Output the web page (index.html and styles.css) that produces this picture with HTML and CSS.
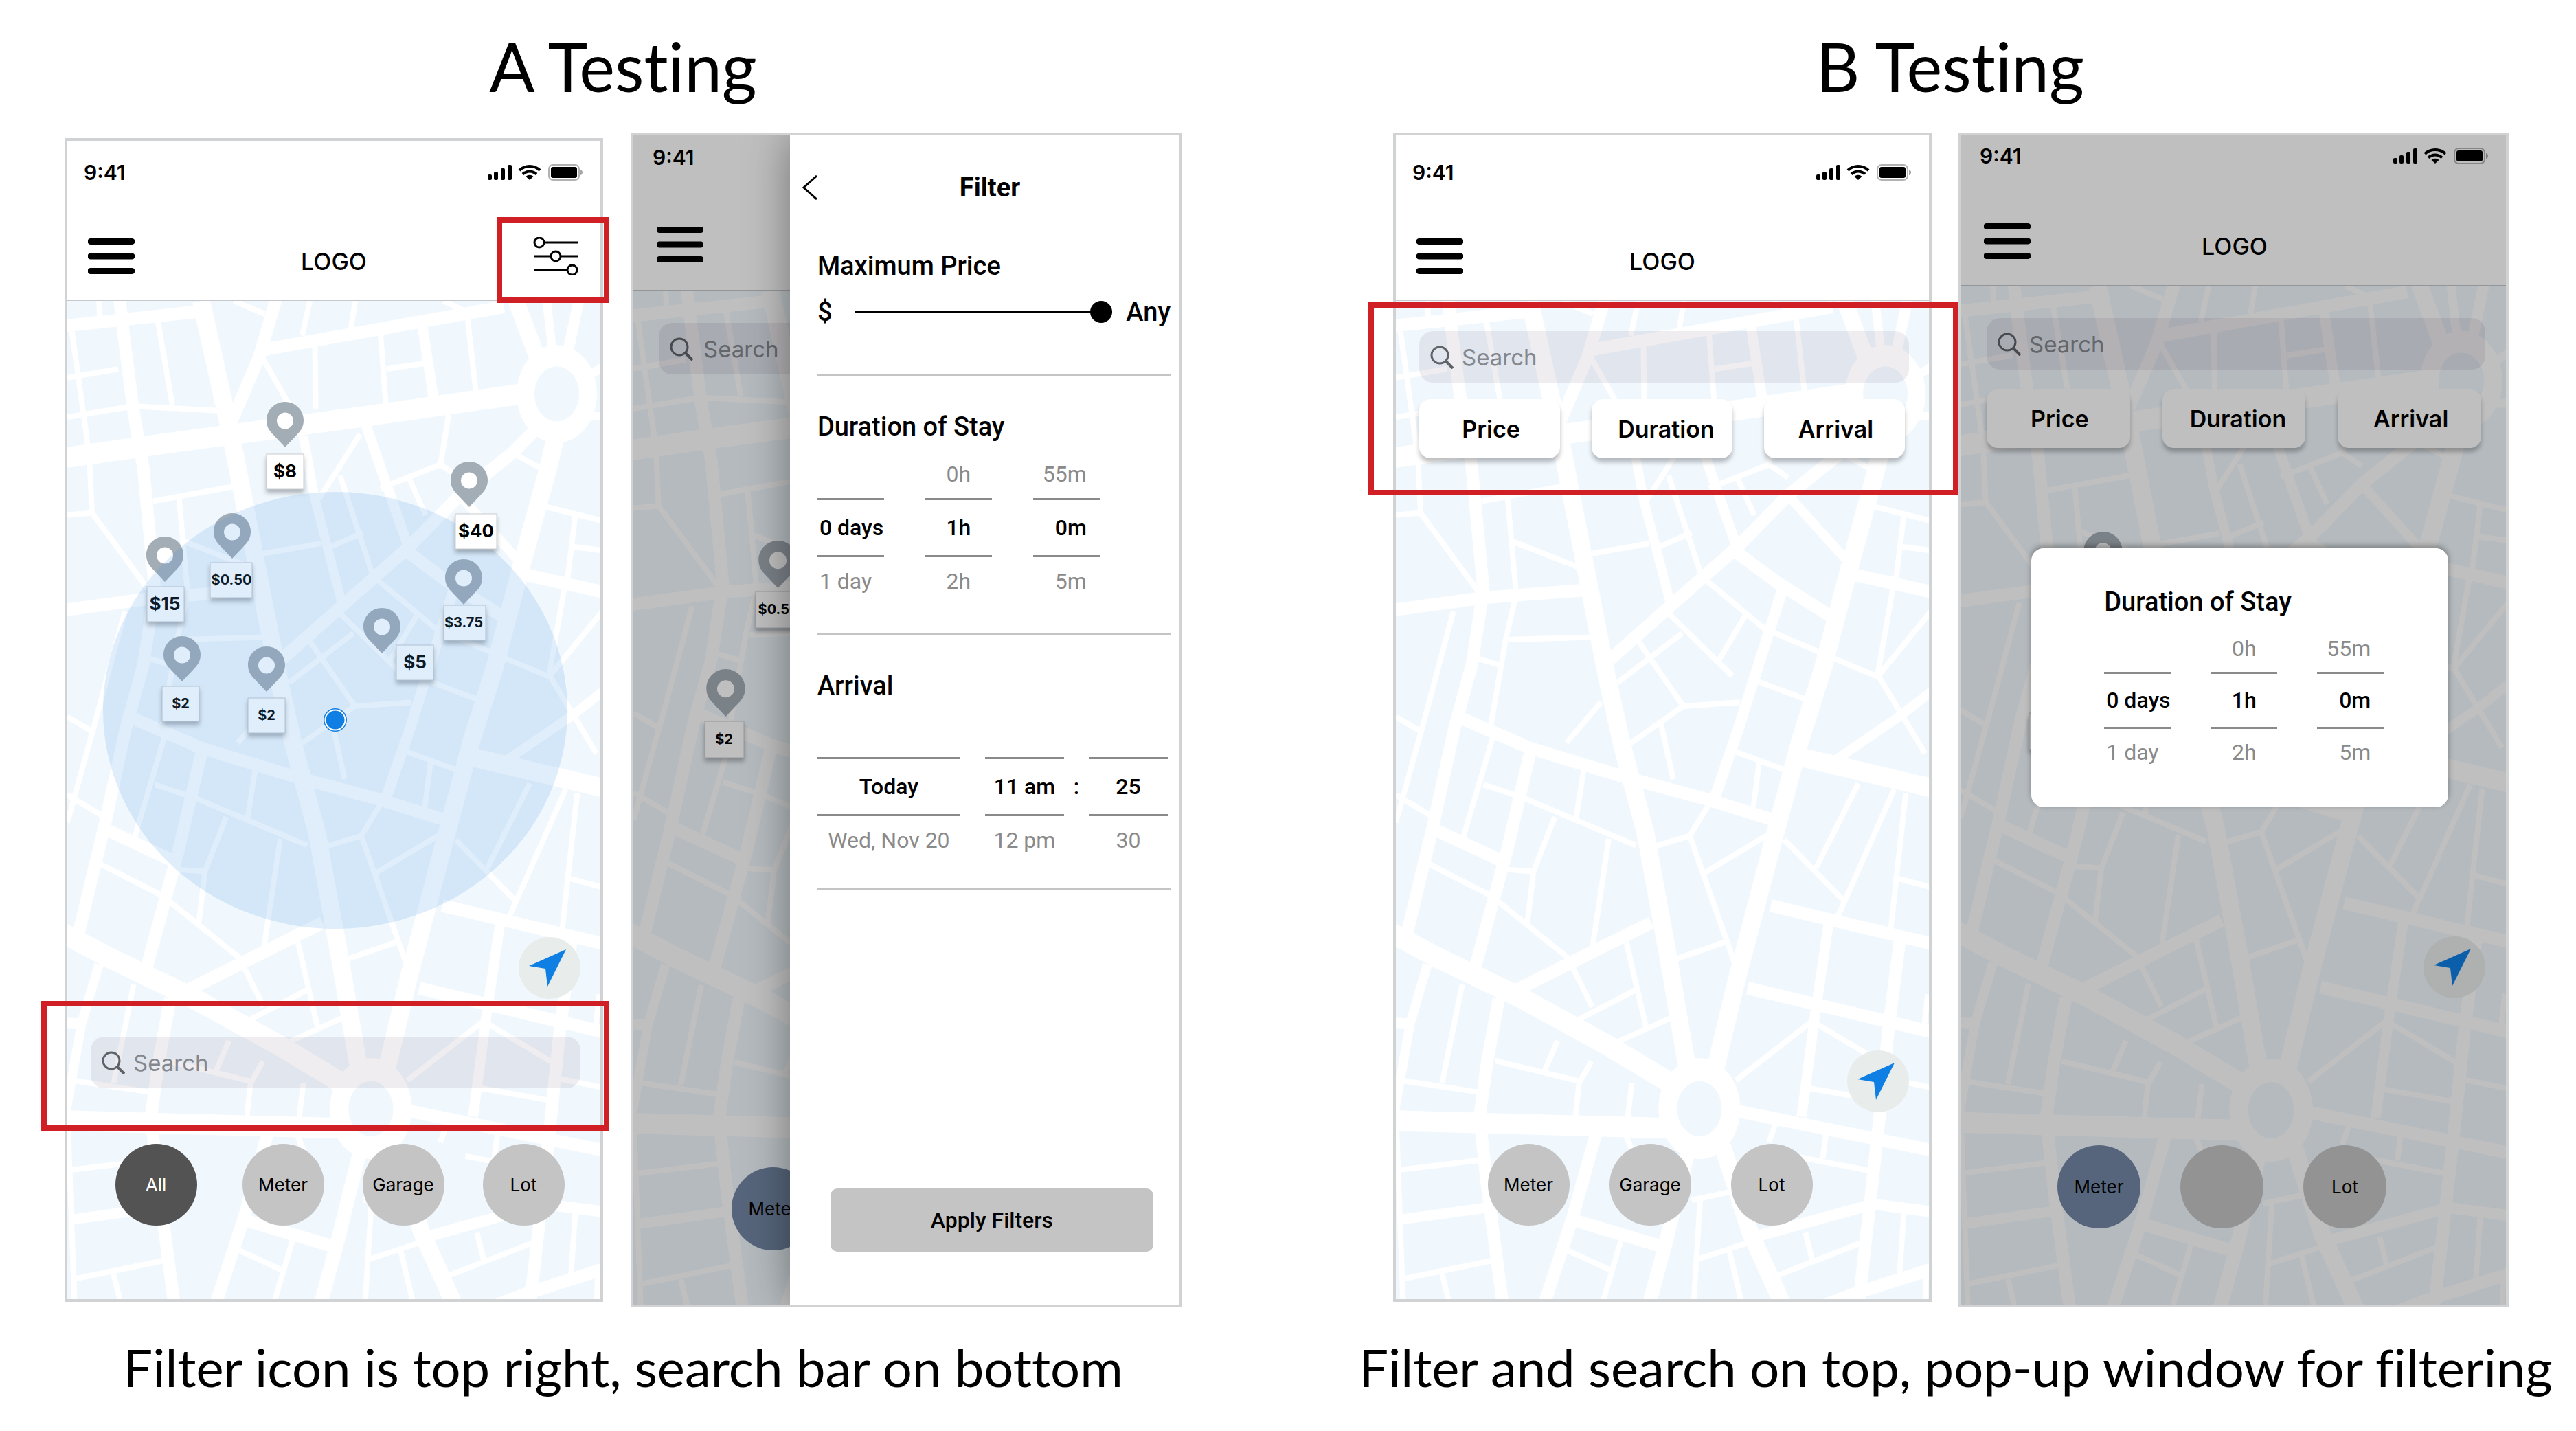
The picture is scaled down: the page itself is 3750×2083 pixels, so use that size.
FILE: index.html
```html
<!DOCTYPE html>
<html lang="en">
<head>
<meta charset="utf-8">
<meta name="viewport" content="width=device-width, initial-scale=1">
<title>Parking app A/B testing</title>
<link rel="stylesheet" href="styles.css">
</head>
<body>
<svg class="defs" aria-hidden="true">
  <!-- Street map shared by all screens -->
  <symbol id="streets" viewBox="93 447 1382 2532" preserveAspectRatio="none">
    <rect x="93" y="447" width="1382" height="2532" fill="#f0f8fe"/>
    <g fill="none" stroke="#fff" stroke-linejoin="round">
      <g stroke-width="52">
        <path d="M80 846L300 815L550 782L900 735L1290 680"/>
        <path d="M440 447L520 800L580 1100L640 1400L680 1576L740 1796L800 2116L850 2400" stroke-width="46"/>
        <path d="M920 2400L980 2156L1050 1896L1140 1566L1200 1380L1270 1120L1340 870L1362 780" stroke-width="46"/>
        <path d="M80 2050L200 2112L420 2216L640 2334L820 2440"/>
        <path d="M80 2526L820 2546"/>
        <path d="M940 2590L1010 2806L1095 2990" stroke-width="44"/>
        <path d="M850 2610L790 2846L750 2990" stroke-width="36"/>
        <path d="M1150 1606L1485 1683" stroke-width="48"/>
        <path d="M1250 430L1315 600" stroke-width="42"/>
      </g>
      <g stroke-width="32">
        <path d="M228 440L240 540L265 730L290 870L320 1180L290 1370L245 1530L190 1776L120 2060"/>
        <path d="M360 2216L330 2376L310 2516L330 2696L370 2990"/>
        <path d="M445 1576L380 1846L298 2140"/>
        <path d="M80 1232L320 1200L590 1180"/>
        <path d="M200 1791L365 1866"/>
        <path d="M245 1498L440 1581L690 1656L900 1711L1080 1766"/>
        <path d="M650 1355L800 1225L980 1070L1110 940L1250 830L1330 750"/>
        <path d="M970 1080L1080 1160L1225 1250"/>
        <path d="M1100 930L1262 1105" stroke-width="24"/>
        <path d="M1095 1180L1030 1380L980 1536L920 1706" stroke-width="28"/>
        <path d="M1275 1140L1485 1186"/>
        <path d="M1220 1620L1400 1500L1485 1435" stroke-width="24"/>
        <path d="M1065 1981L1485 2078"/>
        <path d="M1005 2190L1485 2302"/>
        <path d="M1215 2026L1180 2256L1145 2516" stroke-width="26"/>
        <path d="M1400 2066L1370 2296L1345 2536L1320 2756L1293 2990"/>
        <path d="M755 2024L395 2200"/>
        <path d="M175 2130L130 2280L90 2500" stroke-width="24"/>
        <path d="M975 2501L1485 2602"/>
        <path d="M80 511L435 474"/>
        <path d="M595 572L1225 462"/>
        <path d="M635 440L590 590L520 750"/>
        <path d="M1335 440L1350 570" stroke-width="22"/>
        <path d="M1420 440L1388 590" stroke-width="28"/>
        <path d="M1440 640L1485 612M1440 740L1485 738" stroke-width="22"/>
        <path d="M1005 2826L1330 2738L1485 2758" stroke-width="28"/>
        <path d="M1485 2902L1280 2966L1200 2996"/>
        <path d="M612 2560L550 2776L478 2990"/>
        <path d="M558 2780L785 2846"/>
        <path d="M100 2778L335 2746" stroke-width="26"/>
        <path d="M1012 500L1045 710" stroke-width="26"/>
        <path d="M868 765L980 1080" stroke-width="26"/>
        <path d="M705 790L735 950L805 1215" stroke-width="24"/>
      </g>
      <g stroke-width="14">
        <path d="M105 525L150 840L157 985L315 1195M93 990L157 985M93 642L225 620M93 742L262 714M265 714L520 727"/>
        <path d="M328 500L365 710M175 447L177 490M315 955L540 915M383 950L405 1190L378 1305L338 1530M398 1058L565 1122"/>
        <path d="M385 1306L605 1300M290 1350L362 1370M242 1235L165 1516L93 1770M93 1502L160 1540M93 1700L190 1756"/>
        <path d="M590 1090L750 1062M598 590L668 710M735 560L737 720M905 530L920 725M920 620L1020 605M1130 485L1152 675"/>
        <path d="M722 447L702 535M840 447L828 515M525 447L605 480M1068 447L1130 475"/>
        <path d="M745 950L852 785M800 890L882 1135M765 1075L860 1035M905 922L1060 862L1110 895M1060 865L1082 735M978 895L1022 990"/>
        <path d="M1232 825L1318 870M1330 968L1480 1005M1410 990L1390 1150M1400 1070L1480 1080M1382 1175L1342 1395L1465 1595"/>
        <path d="M1480 1235L1342 1400L1220 1350L1065 1285M1020 1408L1162 1460M885 1145L1065 1292M1002 1240L928 1362"/>
        <path d="M795 1235L965 1398M718 1305L838 1475L985 1465M668 1415L835 1290M625 1465L535 1568M838 1475L700 1570M778 1510L812 1660"/>
      </g>
      <g stroke-width="14" transform="translate(0 1516)">
        <path d="M350 20L268 290M320 158L420 190L715 312M580 120L560 245M505 240L450 378L433 515M372 373L450 378"/>
        <path d="M180 360L340 440L545 602M645 295L603 570M548 615L602 722M690 555L742 775M535 770L722 675M635 825L805 750"/>
        <path d="M755 317L855 288L910 200M855 288L980 635M893 382L1070 278M815 602L945 558M955 68L1105 122M1035 100L1020 215"/>
        <path d="M1100 298L1252 450M1182 370L1292 155M1240 490L1385 170M1415 180L1390 400L1375 535M1390 395L1480 418"/>
        <path d="M975 908L1172 758L1350 862M1165 928L1350 960M1360 902L1480 926M1472 690L1462 780"/>
        <path d="M350 858L575 912M512 808L478 885M600 860L568 915L558 1005M705 915L693 1010M265 665L213 915M105 908L320 940"/>
        <path d="M93 763L130 765" stroke-width="28"/>
        <path d="M98 1136L315 1110M110 1412L345 1365M213 1400L232 1475M540 1340L655 1392M678 1310L628 1475M860 1212L965 1190"/>
        <path d="M882 1210L865 1475M875 1362L1012 1318M955 1330L990 1475M1082 1005L1060 1065M1208 1045L1200 1105M1125 1100L1325 1138"/>
        <path d="M1155 1295L1172 1362M1085 1402L1305 1318M1410 1245L1398 1410M1468 1390L1466 1475M95 1030L112 1480M690 1050L725 1130"/>
      </g>
    </g>
    <g fill="#fff">
      <ellipse cx="1362" cy="683" rx="104" ry="124"/>
      <ellipse cx="880" cy="2496" rx="106" ry="128"/>
    </g>
    <g fill="#f0f8fe">
      <ellipse cx="1362" cy="683" rx="58" ry="70"/>
      <ellipse cx="880" cy="2496" rx="58" ry="70"/>
    </g>
  </symbol>

  <symbol id="pin" viewBox="0 0 54 66">
    <path d="M27 12.500a15 15 0 1 0 0 30a15 15 0 1 0 0-30z" fill="#fff"/>
    <path fill-rule="evenodd" d="M27 0C12 0 0 12 0 27c0 9 4 15 10 21l17 18 17-18c6-6 10-12 10-21C54 12 42 0 27 0zm0 15.500a12 12 0 1 1 0 24a12 12 0 1 1 0-24z" fill="#a3adb5"/>
  </symbol>

  <symbol id="status" viewBox="0 0 138 24">
    <rect x="0" y="15" width="6" height="8" rx="2"/><rect x="9" y="11" width="6" height="12" rx="2"/>
    <rect x="19" y="6" width="6" height="17" rx="2"/><rect x="29" y="1" width="6" height="22" rx="2"/>
    <path d="M46 9C54 1 68 1 76 9M51 14.500C57 9 65 9 71 14.500" fill="none" stroke="#000" stroke-width="4"/>
    <path d="M61 23l-5.500-5c3-3 8-3 11 0z"/>
    <rect x="89" y="1" width="44" height="22" rx="6" fill="none" stroke="#000" stroke-opacity=".3" stroke-width="2"/>
    <rect x="92" y="4" width="38" height="16" rx="3"/>
    <path d="M135 8c4 1 4 7 0 8z" fill-opacity=".35"/>
  </symbol>

  <symbol id="menu" viewBox="0 0 68 54">
    <path d="M4 5.500h60M4 27h60M4 48.500h60" stroke="#000" stroke-width="9" stroke-linecap="round"/>
  </symbol>

  <symbol id="glass" viewBox="0 0 34 34">
    <g fill="none" stroke="#5f6368" stroke-width="3"><circle cx="14" cy="14" r="12"/><path d="M22.500 22.500L33 33" stroke-width="4"/></g>
  </symbol>

  <symbol id="sliders" viewBox="0 0 66 56">
    <g fill="none" stroke="#000" stroke-width="3">
      <circle cx="9" cy="8" r="7"/><path d="M16 8h49"/>
      <circle cx="33" cy="28" r="7"/><path d="M1 28h25M40 28h25"/>
      <circle cx="57" cy="48" r="7"/><path d="M1 48h49"/>
    </g>
  </symbol>

  <symbol id="arrow" viewBox="0 0 54 54"><path d="M54 0L27 54L24 28L0 24z" fill="#0f7fe3"/></symbol>
</svg>

<main class="board">
  <section class="variant">
    <h2 class="variant__title">A Testing</h2>
    <div class="screens">

      <article class="phone phone--a1">
        <header class="top">
          <div class="status"><span>9:41</span><svg class="status__icons"><use href="#status"/></svg></div>
          <nav class="nav">
            <button class="icon-btn" aria-label="Menu"><svg class="icon-menu"><use href="#menu"/></svg></button>
            <span class="logo">LOGO</span>
            <button class="icon-btn" aria-label="Filters"><svg class="icon-sliders"><use href="#sliders"/></svg></button>
          </nav>
          <span class="mark mark--filter"></span>
        </header>
        <div class="map map--a1">
          <svg class="map__streets"><use href="#streets" width="100%" height="100%"/></svg>
          <svg class="map__pins" viewBox="0 0 776 1453">
            <g class="price">
              <use href="#pin" x="290" y="147" width="54" height="66"/><rect x="290" y="223" width="54" height="51"/><text x="317" y="257">$8</text>
              <use href="#pin" x="213" y="309" width="54" height="66"/><rect x="208" y="381" width="61" height="51"/><text class="small" x="239" y="413">$0.50</text>
              <use href="#pin" x="115" y="343" width="54" height="66"/><rect x="116" y="416" width="54" height="51"/><text x="142" y="450">$15</text>
              <use href="#pin" x="550" y="376" width="54" height="66"/><rect x="548" y="443" width="61" height="51"/><text class="small" x="577" y="475">$3.75</text>
              <use href="#pin" x="431" y="447" width="54" height="66"/><rect x="479" y="501" width="54" height="51"/><text x="506" y="535">$5</text>
              <use href="#pin" x="140" y="488" width="54" height="66"/><rect x="138" y="561" width="54" height="51"/><text class="small" x="165" y="593">$2</text>
              <use href="#pin" x="263" y="503" width="54" height="66"/><rect x="263" y="578" width="54" height="51"/><text class="small" x="290" y="610">$2</text>
            </g>
            <ellipse cx="390" cy="596" rx="338" ry="318" fill="#4696e1" fill-opacity=".17"/>
            <g class="price">
              <use href="#pin" x="558" y="234" width="54" height="66"/><rect x="565" y="310" width="60" height="51"/><text x="595" y="344">$40</text>
            </g>
            <circle class="here" cx="390" cy="610" r="17"/><circle cx="390" cy="610" r="14.500" fill="none" stroke="#fff" stroke-width="2"/>
          </svg>
          <button class="locate" aria-label="My location"><svg class="locate__icon"><use href="#arrow"/></svg></button>
          <label class="search"><svg class="search__icon"><use href="#glass"/></svg><input type="search" placeholder="Search" aria-label="Search"></label>
          <div class="types">
            <button class="type type--dark">All</button>
            <button class="type">Meter</button>
            <button class="type">Garage</button>
            <button class="type">Lot</button>
          </div>
          <span class="mark mark--search"></span>
        </div>
      </article>

      <article class="phone phone--a2">
        <header class="top">
          <div class="status"><span>9:41</span></div>
          <nav class="nav"><button class="icon-btn" aria-label="Menu"><svg class="icon-menu"><use href="#menu"/></svg></button></nav>
        </header>
        <div class="map map--a2">
          <svg class="map__streets"><use href="#streets" width="100%" height="100%"/></svg>
          <svg class="map__pins" viewBox="0 0 792 1476">
            <g class="price">
              <use href="#pin" x="181" y="364" width="57" height="69"/><rect x="177" y="438" width="62" height="53"/><text class="small" x="210" y="471">$0.50</text>
              <use href="#pin" x="105" y="551" width="57" height="69"/><rect x="103" y="627" width="57" height="53"/><text class="small" x="131" y="660">$2</text>
            </g>
          </svg>
          <label class="search"><svg class="search__icon"><use href="#glass"/></svg><input type="search" placeholder="Search" aria-label="Search"></label>
          <div class="types"><button class="type type--blue">Meter</button></div>
        </div>
        <div class="shade"></div>
        <form class="drawer">
          <div class="drawer__head">
            <button type="button" class="icon-btn" aria-label="Back"><svg class="icon-back" viewBox="0 0 22 36"><path d="M21 1L2 18L21 35" fill="none" stroke="#000" stroke-width="3"/></svg></button>
            <h3 class="drawer__title">Filter</h3>
          </div>
          <section class="group group--price">
            <h4 class="group__title"><label for="price">Maximum Price</label></h4>
            <div class="slider"><span>$</span><input id="price" type="range" min="0" max="100" value="100"><span>Any</span></div>
          </section>
          <section class="group">
            <h4 class="group__title">Duration of Stay</h4>
            <div class="wheels">
              <ul class="wheel wheel--left"><li></li><li>0 days</li><li>1 day</li></ul>
              <ul class="wheel"><li>0h</li><li>1h</li><li>2h</li></ul>
              <ul class="wheel wheel--right"><li>55m</li><li>0m</li><li>5m</li></ul>
            </div>
          </section>
          <section class="group group--arrival">
            <h4 class="group__title">Arrival</h4>
            <div class="wheels wheels--time">
              <ul class="wheel wheel--date"><li></li><li>Today</li><li>Wed, Nov 20</li></ul>
              <ul class="wheel"><li></li><li>11 am</li><li>12 pm</li></ul>
              <span class="colon">:</span>
              <ul class="wheel"><li></li><li>25</li><li>30</li></ul>
            </div>
          </section>
          <button type="button" class="apply">Apply Filters</button>
        </form>
      </article>
    </div>
    <p class="caption">Filter icon is top right, search bar on bottom</p>
  </section>

  <section class="variant variant--b">
    <h2 class="variant__title">B Testing</h2>
    <div class="screens">

      <article class="phone phone--b1">
        <header class="top">
          <div class="status"><span>9:41</span><svg class="status__icons"><use href="#status"/></svg></div>
          <nav class="nav">
            <button class="icon-btn" aria-label="Menu"><svg class="icon-menu"><use href="#menu"/></svg></button>
            <span class="logo">LOGO</span>
          </nav>
        </header>
        <div class="map map--b1">
          <svg class="map__streets"><use href="#streets" width="100%" height="100%"/></svg>
          <label class="search"><svg class="search__icon"><use href="#glass"/></svg><input type="search" placeholder="Search" aria-label="Search"></label>
          <div class="chips"><button class="chip">Price</button><button class="chip">Duration</button><button class="chip">Arrival</button></div>
          <button class="locate" aria-label="My location"><svg class="locate__icon"><use href="#arrow"/></svg></button>
          <div class="types"><button class="type">Meter</button><button class="type">Garage</button><button class="type">Lot</button></div>
          <span class="mark mark--top"></span>
        </div>
      </article>

      <article class="phone phone--b2">
        <header class="top">
          <div class="status"><span>9:41</span><svg class="status__icons"><use href="#status"/></svg></div>
          <nav class="nav">
            <button class="icon-btn" aria-label="Menu"><svg class="icon-menu"><use href="#menu"/></svg></button>
            <span class="logo">LOGO</span>
          </nav>
        </header>
        <div class="map map--b2">
          <svg class="map__streets"><use href="#streets" width="100%" height="100%"/></svg>
          <svg class="map__pins" viewBox="0 0 792 1483">
            <g class="price"><use href="#pin" x="178" y="358" width="57" height="69"/><rect x="99" y="622" width="57" height="53"/></g>
          </svg>
          <label class="search"><svg class="search__icon"><use href="#glass"/></svg><input type="search" placeholder="Search" aria-label="Search"></label>
          <div class="chips"><button class="chip">Price</button><button class="chip">Duration</button><button class="chip">Arrival</button></div>
          <button class="locate" aria-label="My location"><svg class="locate__icon"><use href="#arrow"/></svg></button>
          <div class="types"><button class="type type--blue">Meter</button><button class="type" aria-label="Garage"></button><button class="type">Lot</button></div>
        </div>
        <div class="shade"></div>
        <section class="popup">
          <h4 class="group__title">Duration of Stay</h4>
          <div class="wheels">
            <ul class="wheel wheel--left"><li></li><li>0 days</li><li>1 day</li></ul>
            <ul class="wheel"><li>0h</li><li>1h</li><li>2h</li></ul>
            <ul class="wheel wheel--right"><li>55m</li><li>0m</li><li>5m</li></ul>
          </div>
        </section>
      </article>
    </div>
    <p class="caption">Filter and search on top, pop-up window for filtering</p>
  </section>
</main>
</body>
</html>
```
FILE: styles.css
```css
* { box-sizing: border-box; }

body {
  margin: 0;
  background: #fff;
  color: #000;
  font-family: Inter, "Liberation Sans", sans-serif;
}

h2, h3, h4, p, ul { margin: 0; padding: 0; font-weight: 400; }
ul { list-style: none; }
button, input { font: inherit; color: inherit; }
button { border: 0; padding: 0; cursor: pointer; }
svg { display: block; }
.defs { position: absolute; width: 0; height: 0; }

/* Board */
.board {
  display: grid;
  grid-template-columns: 1fr 1fr;
  gap: 118px;
  padding: 36px 4px 40px 0;
}
.variant { min-width: 0; }
.variant__title,
.caption {
  font-family: Lato, "Open Sans", sans-serif;
  font-variant-ligatures: none;
  text-align: center;
  white-space: nowrap;
}
.variant__title { font-size: 98px; line-height: 120px; }
.caption { margin-top: 42px; font-size: 76px; line-height: 90px; }
.screens {
  display: grid;
  grid-template-columns: 784fr 802fr;
  align-items: start;
  gap: 40px;
  margin-top: 37px;
  padding: 0 94px;
}
.variant--b .screens { gap: 38px; padding-left: 96px; }
.variant--b .caption { padding-left: 16px; }

/* Phone */
.phone {
  position: relative;
  display: flex;
  flex-direction: column;
  border: 4px solid #d0d2d3;
  background: #fff;
}
.phone--a1 { margin-top: 8px; }
.top {
  position: relative;
  z-index: 1;
  padding: 26px 30px 28px;
  border-bottom: 1px solid #c4c8cc;
}
.phone--b1 .top { padding-top: 34px; }
.phone--a2 .top { padding-top: 12px; padding-left: 34px; }
.phone--b2 .top { padding-top: 10px; padding-left: 34px; }
.status {
  display: flex;
  align-items: center;
  justify-content: space-between;
  height: 40px;
  margin: 0 -4px 66px -6px;
  font-size: 30px;
  font-weight: 600;
}
.phone--a2 .status { margin-bottom: 71px; }
.phone--b2 .status { margin-bottom: 68px; }
.phone--a2 .top { padding-bottom: 30px; }
.status__icons { width: 138px; height: 24px; }
.nav {
  display: grid;
  grid-template-columns: 1fr auto 1fr;
  align-items: center;
  height: 72px;
}
.nav .icon-btn:last-child { justify-self: end; }
.nav .icon-btn:first-child { justify-self: start; }
.icon-btn { background: none; }
.icon-menu { width: 68px; height: 54px; }
.icon-sliders { width: 66px; height: 56px; margin-right: 2px; }
.icon-back { width: 22px; height: 36px; }
.logo { padding-top: 14px; font-size: 34px; font-weight: 500; }

/* Map */
.map {
  position: relative;
  display: flex;
  flex-direction: column;
  min-height: 1453px;
  padding: 44px 29px 107px 34px;
}
.map--a2 { min-height: 1476px; padding: 47px 29px 79px 37px; }
.map--b2 { min-height: 1483px; padding: 47px 30px 111px 38px; }
.map > * { position: relative; }
.map > .map__streets, .map > .map__pins {
  position: absolute;
  inset: 0;
  width: 100%;
  height: 100%;
}
.price rect { fill: #fff; filter: drop-shadow(0 5px 3px rgba(0, 0, 0, .28)); stroke: #c8ccd0; stroke-width: 1; }
.price text { font-size: 26px; font-weight: 700; text-anchor: middle; }
.price .small { font-size: 20px; }
.here { fill: #0f7fe3; }

.search {
  display: flex;
  align-items: center;
  gap: 12px;
  height: 75px;
  padding: 0 16px;
  border-radius: 20px;
  background: rgba(120, 105, 120, .12);
}
.map--a2 .search { gap: 15px; }
.search__icon { flex: none; width: 34px; height: 34px; }
.search input {
  flex: 1;
  min-width: 0;
  border: 0;
  padding: 0;
  background: none;
  font-size: 33px;
  outline: 0;
}
.search input::placeholder { color: #84888e; opacity: 1; }

.chips { display: flex; justify-content: space-between; margin-top: 24px; padding-right: 6px; }
.map--b2 .chips { margin-top: 28px; }
.chip {
  width: 29%;
  height: 86px;
  padding-left: 4px;
  border-radius: 16px;
  background: #fff;
  box-shadow: 0 6px 6px rgba(0, 0, 0, .25);
  font-size: 34px;
  font-weight: 600;
}
.chip:nth-child(2) { padding-left: 12px; }

.locate {
  display: grid;
  place-items: center;
  align-self: flex-end;
  width: 90px;
  height: 90px;
  margin-top: auto;
  border-radius: 50%;
  background: #e8eceb;
}
.locate__icon { width: 54px; height: 54px; margin-right: 6px; }

.types { display: flex; justify-content: center; gap: 56px; }
.type {
  width: 119px;
  height: 119px;
  border-radius: 50%;
  background: #c4c4c4;
  font-size: 26px;
}
.type--dark { margin-right: 10px; background: #535353; color: #fff; }
.type--blue { background: #7387a4; }

.map--a1 .search { margin-top: 55px; }
.map--a1 .types { margin-top: 81px; padding-left: 12px; }
.map--b1 .types { margin-top: 46px; padding-right: 41px; gap: 58px; }
.map--b2 .types { margin-top: 214px; padding-right: 41px; gap: 58px; }
.map--a2 .types { margin-top: auto; justify-content: flex-start; padding-left: 106px; }
.map--a2 .type, .map--b2 .type { width: 121px; height: 121px; }

/* Red annotation frames */
.mark { border: 8px solid #d11f26; pointer-events: none; }
.top .mark, .map > .mark { position: absolute; }
.mark--filter { top: 111px; right: -13px; width: 164px; height: 125px; }
.mark--search { left: -38px; right: -13px; bottom: 245px; height: 189px; }
.mark--top { left: -40px; right: -43px; top: 2px; height: 281px; }

/* Dimmed screens */
.shade { position: absolute; z-index: 2; inset: 0; background: rgba(0, 0, 0, .25); }

/* Filter drawer */
.drawer {
  position: absolute;
  z-index: 3;
  inset: 0 0 0 auto;
  width: 71.3%;
  display: flex;
  flex-direction: column;
  padding: 46px 12px 77px 18px;
  background: #fff;
  font-family: Roboto, "Liberation Sans", sans-serif;
  clip-path: inset(0 0 0 -100px);
  box-shadow: 0 0 60px rgba(0, 0, 0, .4);
}
.drawer__head { display: flex; align-items: center; height: 60px; }
.drawer__title { flex: 1; margin-right: 12px; text-align: center; font-size: 38px; font-weight: 700; }
.group {
  margin-left: 22px;
  padding: 52px 0 41px;
  border-bottom: 2px solid #c4c4c4;
}
.group--price { padding: 62px 0 61px; }
.group--arrival { padding-bottom: 35px; }
.group__title { margin-bottom: 12px; font-size: 38px; font-weight: 500; line-height: 44px; }
.slider {
  display: flex;
  align-items: center;
  height: 60px;
  margin-top: 15px;
  font-size: 38px;
  font-weight: 500;
}
.slider input {
  appearance: none;
  flex: 1;
  min-width: 0;
  height: 32px;
  margin: 0 20px 0 33px;
  background: linear-gradient(#000, #000) center / 100% 4px no-repeat;
}
.slider input::-webkit-slider-thumb {
  appearance: none;
  width: 32px;
  height: 32px;
  border-radius: 50%;
  background: #000;
}
.wheels { display: grid; grid-template-columns: 97px 97px 97px; column-gap: 60px; }
.wheel { text-align: center; font-size: 32px; color: #8a8a8a; white-space: nowrap; }
.wheel li { height: 70px; line-height: 70px; }
.wheel li:nth-child(2) {
  height: 86px;
  line-height: 80px;
  border: solid #8a8a8a;
  border-width: 3px 0;
  color: #000;
  font-weight: 500;
}
.wheel--left { text-align: left; text-indent: 3px; }
.wheel--right { text-align: right; }
.wheel--right li { padding-right: 19px; }
.wheels--time { grid-template-columns: 244px 115px 36px 115px; column-gap: 0; }
.wheel--date { width: 208px; }
.colon { padding-top: 70px; text-align: center; font-size: 32px; font-weight: 500; line-height: 86px; }
.apply {
  align-self: center;
  width: 470px;
  height: 92px;
  margin-top: auto;
  margin-left: 16px;
  border-radius: 10px;
  background: #c4c4c4;
  font-size: 32px;
  font-weight: 500;
}

/* Duration pop-up */
.popup {
  position: absolute;
  z-index: 3;
  top: 601px;
  left: 13%;
  width: 607px;
  padding: 56px 30px 46px 106px;
  border-radius: 18px;
  background: #fff;
  box-shadow: 0 -3px 8px rgba(0, 0, 0, .35);
  font-family: Roboto, "Liberation Sans", sans-serif;
}
.popup .group__title { margin-bottom: 12px; }
.popup .wheels { column-gap: 58px; }
.popup .wheel li { height: 68px; line-height: 68px; }
.popup .wheel li:nth-child(2) { height: 83px; line-height: 77px; }
```
